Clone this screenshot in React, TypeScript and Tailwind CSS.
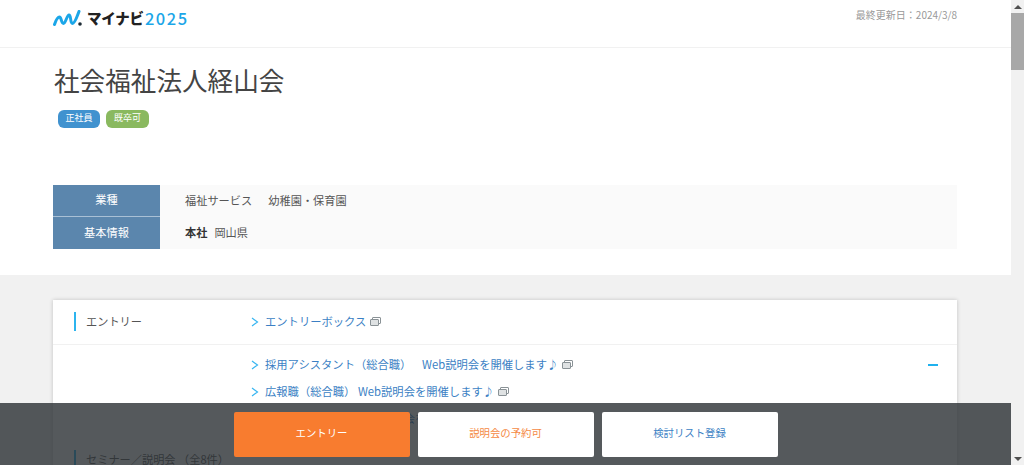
const font = { fontFamily: '"Noto Sans CJK JP", "Noto Sans", sans-serif' };

function Chevron() {
  return (
    <svg width="8" height="10" viewBox="0 0 8 10" fill="none" className="mr-[6px] shrink-0">
      <path d="M1 1l5.500 4L1 9" stroke="#38b6f1" strokeWidth="1.200" />
    </svg>
  );
}

function WindowIcon() {
  return (
    <svg width="11" height="9" viewBox="0 0 11 9" fill="none" className="ml-1 shrink-0">
      <rect x="2.500" y="0.500" width="8" height="6" rx="0.500" stroke="#8a9296" />
      <rect x="0.500" y="2.500" width="8" height="6" rx="0.500" fill="#dfe2e3" stroke="#8a9296" />
    </svg>
  );
}

function LinkRow({ text }: { text: string }) {
  return (
    <div className="flex h-[27px] items-center text-[11.3px] text-[#3b7fc4]">
      <Chevron />
      <span className="whitespace-pre">{text}</span>
      <WindowIcon />
    </div>
  );
}

function Logo() {
  return (
    <div className="flex items-center">
      <svg width="30" height="17" viewBox="0 0 30 17" fill="none" className="mr-[4px]">
        <path
          d="M1.500 14.500C3 10 5 7 6.500 7c2 0 1.500 6.500 4 6.500 2 0 3.500-8.500 5.500-8.500 2.300 0 1 8.500 3.500 8.500 2.500 0 4.500-7 6.500-12"
          stroke="#1ba6e8"
          strokeWidth="3"
          strokeLinecap="round"
        />
        <circle cx="27" cy="14" r="1.800" fill="#1d2b36" />
      </svg>
      <span className="text-[14.5px] leading-none font-black tracking-[-0.2px] text-[#222]">マイナビ</span>
      <span className="ml-[1px] text-[16.5px] leading-none font-medium tracking-[1.5px] text-[#1ba6e8]">2025</span>
    </div>
  );
}

function Scrollbar() {
  return (
    <div className="flex h-full w-[13px] shrink-0 flex-col items-center justify-between bg-[#f1f1f1]">
      <div className="flex w-full flex-col">
        <div className="flex h-[13px] items-center justify-center">
          <div className="h-0 w-0 border-x-[4px] border-b-[4px] border-x-transparent border-b-[#505050]" />
        </div>
        <div className="h-[57px] w-full bg-[#a8a8a8]" />
      </div>
      <div className="flex h-[13px] items-center justify-center">
        <div className="h-0 w-0 border-x-[4px] border-t-[4px] border-x-transparent border-t-[#505050]" />
      </div>
    </div>
  );
}

export default function App() {
  return (
    <div className="flex h-[465px] w-[1024px] overflow-hidden bg-white" style={font}>
      <div className="relative h-full w-[1011px] overflow-hidden">
        <header className="flex h-[48px] items-start justify-between border-b border-[#f1f1f1] pr-[54px] pl-[53px]">
          <div className="pt-[10px]">
            <Logo />
          </div>
          <p className="pt-[8px] text-[10px] leading-[14px] text-[#999]">最終更新日：2024/3/8</p>
        </header>

        <section className="h-[227px] pr-[54px] pl-[53px]">
          <h1 className="pt-[14px] pl-[1px] text-[25.6px] leading-[36px] text-[#444]">社会福祉法人経山会</h1>
          <div className="mt-[12px] flex gap-[6px] pl-[5px]">
            <span className="flex h-[18px] w-[42px] items-center justify-center rounded-md bg-[#4092cf] pb-[2px] text-[9px] text-white">正社員</span>
            <span className="flex h-[18px] w-[43px] items-center justify-center rounded-md bg-[#8ab95f] pb-[2px] text-[9px] text-white">既卒可</span>
          </div>

          <div className="mt-[57px] text-[11.2px]">
            <div className="flex h-8">
              <div className="flex w-[107px] items-center justify-center border-b border-[#a9c0d5] bg-[#5b86ad] pb-[2px] text-white">業種</div>
              <div className="flex flex-1 items-center bg-[#fafafa] pb-[2px] pl-[25px] whitespace-pre text-[#555]">福祉サービス　  幼稚園・保育園</div>
            </div>
            <div className="flex h-8">
              <div className="flex w-[107px] items-center justify-center bg-[#5b86ad] pb-[2px] text-white">基本情報</div>
              <div className="flex flex-1 items-center bg-[#fafafa] pb-[2px] pl-[25px] text-[#555]">
                <b className="mr-[7px] font-bold text-[#333]">本社</b>岡山県
              </div>
            </div>
          </div>
        </section>

        <section className="h-[190px] bg-[#f1f1f1] pt-[25px] pr-[54px] pl-[53px]">
          <div className="h-[300px] bg-white shadow-[0_0_4px_rgba(0,0,0,0.2)]">
            <div className="flex h-[45px] items-center border-b border-[#f1f1f1] pb-[1px] pl-[21px]">
              <div className="w-[177px] border-l-2 border-[#2cb4ee] pl-[10px] text-[11.2px] leading-[19px] text-[#555]">エントリー</div>
              <LinkRow text="エントリーボックス" />
            </div>
            <div className="flex pt-[6px] pr-[19px] pl-[198px]">
              <div className="flex-1">
                <LinkRow text="採用アシスタント（総合職）　  Web説明会を開催します♪" />
                <LinkRow text="広報職（総合職） Web説明会を開催します♪" />
                <LinkRow text="事務職（総合職） Web説明会を開催する" />
              </div>
              <div className="mt-[13px] h-[2px] w-[10px] bg-[#1fb1ee]" />
            </div>
            <div className="mt-[18px] ml-[21px] border-l-2 border-[#2cb4ee] pl-[10px] text-[11.2px] leading-[19px] text-[#555]">
              セミナー／説明会 （全8件）
            </div>
          </div>
        </section>

        <div className="absolute inset-x-0 bottom-0 flex h-[62px] justify-center gap-2 bg-[#2a2f33]/80 pt-[9px]">
          <button className="h-[45px] w-[176px] rounded-[2px] bg-[#f87c2f] pb-[3px] text-[10.4px] text-white">エントリー</button>
          <button className="h-[45px] w-[176px] rounded-[2px] bg-white pb-[3px] text-[10.4px] text-[#f58a45]">説明会の予約可</button>
          <button className="h-[45px] w-[176px] rounded-[2px] bg-white pb-[3px] text-[10.4px] text-[#3b7fc4]">検討リスト登録</button>
        </div>
      </div>
      <Scrollbar />
    </div>
  );
}
